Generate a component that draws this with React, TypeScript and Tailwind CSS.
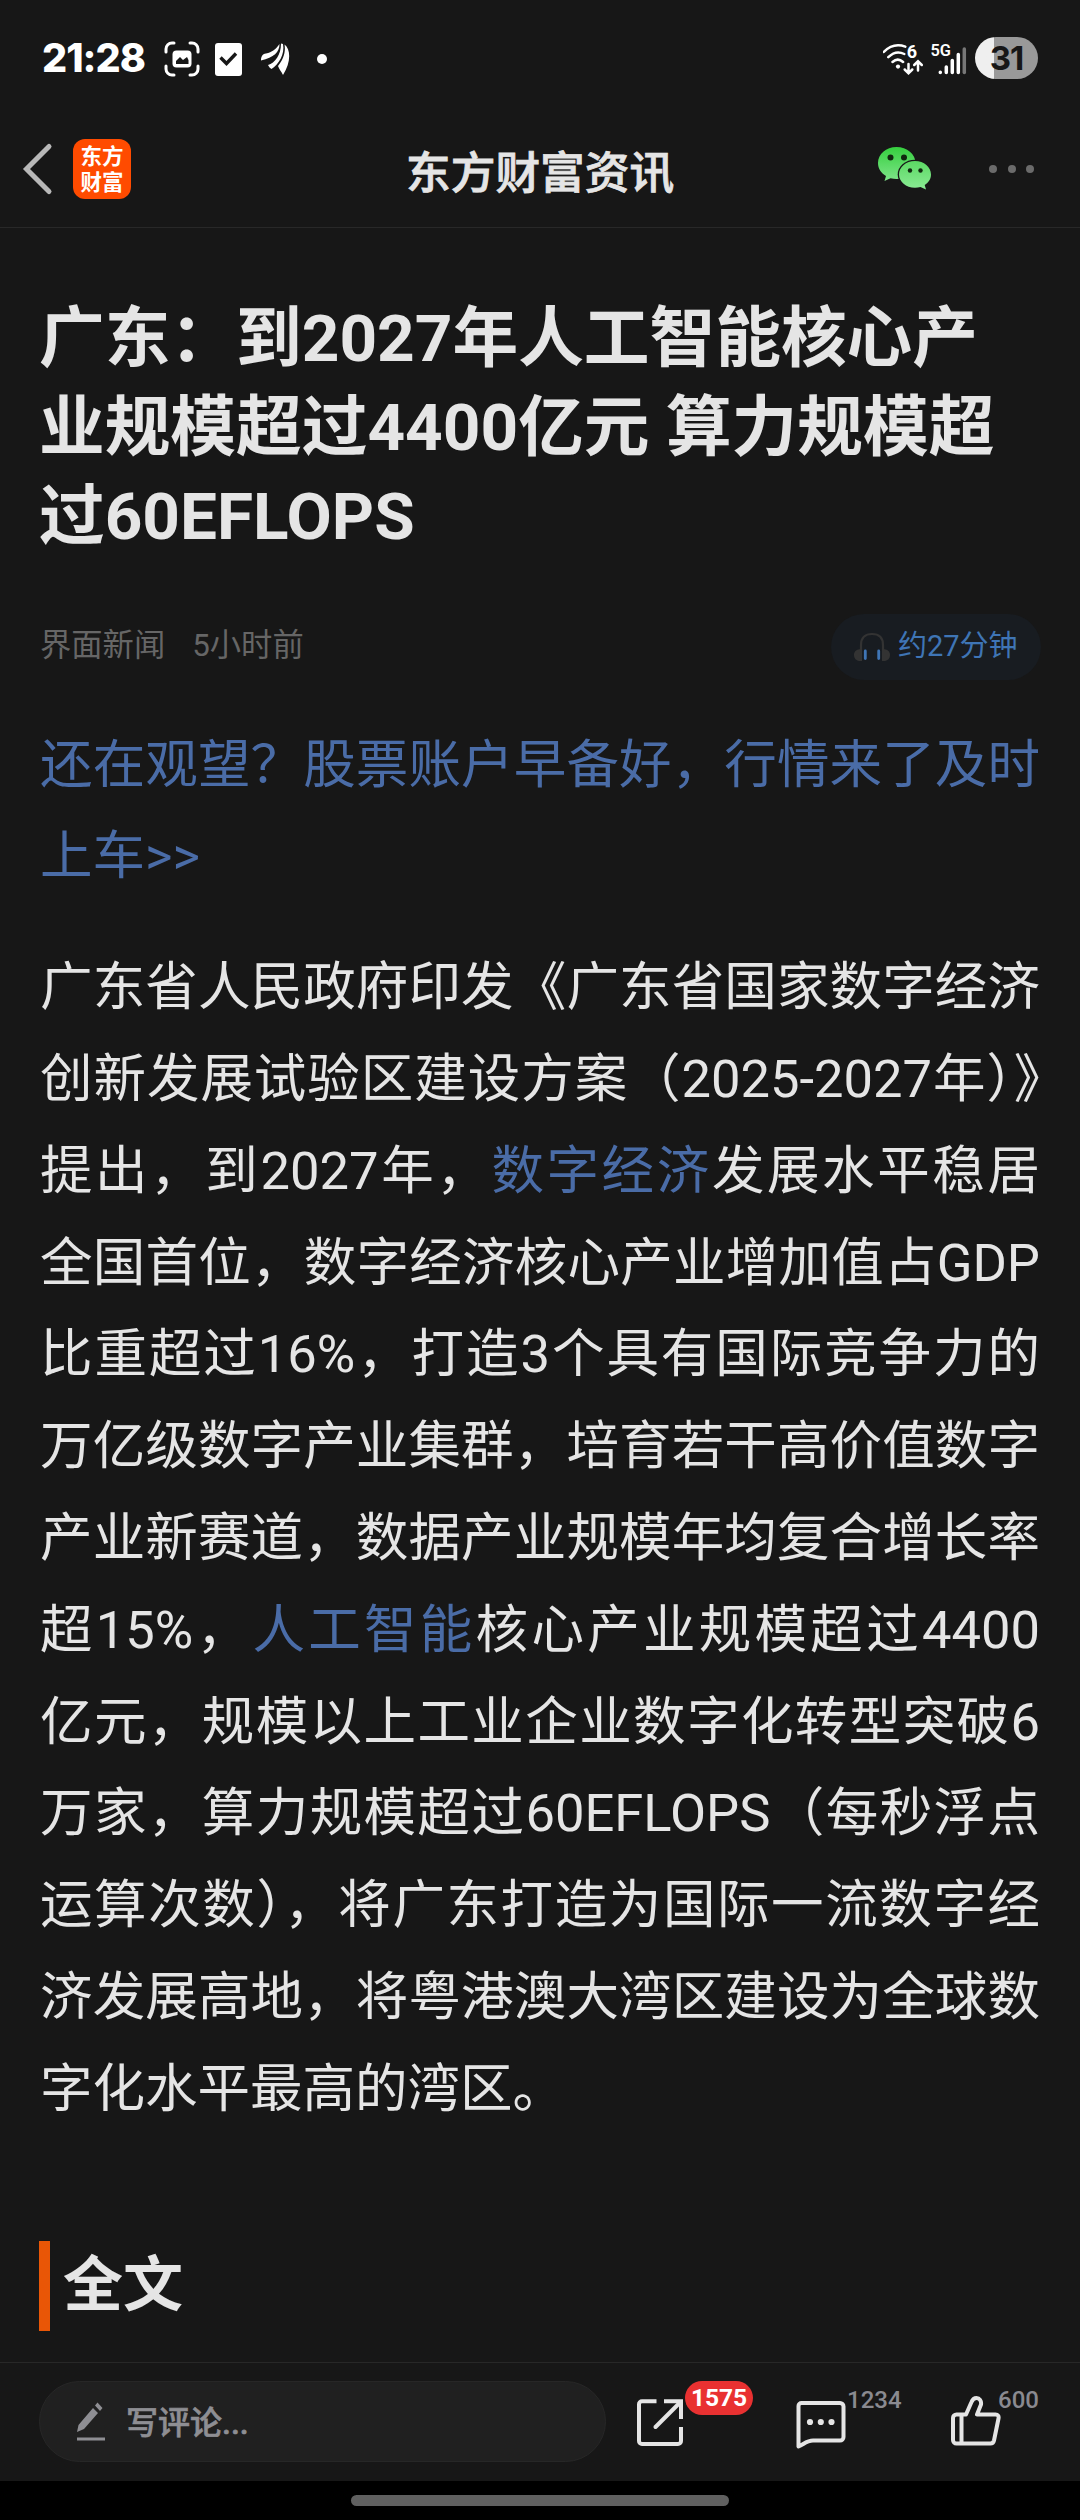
import React from "react";

function StatusBar() {
  return (
    <div className="flex h-[112px] items-start justify-between">
      <div className="flex items-start pl-[42px] pt-[36px]">
        <span className="w-[122px] font-['Inter'] text-[39.5px] font-extrabold leading-[44px] tracking-[-1px] text-white">21:28</span>
        <svg className="mt-[5px]" width="36" height="36" viewBox="0 0 36 36" fill="none">
          <path d="M2 11V8a6 6 0 0 1 6-6h2M26 2h2a6 6 0 0 1 6 6v3M34 25v3a6 6 0 0 1-6 6h-2M10 34H8a6 6 0 0 1-6-6v-3" stroke="#fff" strokeWidth="3" strokeLinecap="round" />
          <rect x="8.500" y="9.500" width="19" height="17" rx="4" fill="#fff" />
          <path d="M12 23v-3l4-4 3 3 4-3 1.500 3v4z" fill="#171717" />
        </svg>
        <svg className="ml-[15px] mt-[7px]" width="27" height="33" viewBox="0 0 27 33" fill="none">
          <rect width="27" height="33" rx="3" fill="#fff" />
          <path d="M5.500 14.500l6 6L21 10.500" stroke="#171717" strokeWidth="3.400" />
        </svg>
        <svg className="ml-[19px] mt-[7px]" width="29" height="33" viewBox="0 0 29 33" fill="#fff">
          <path d="M0 17.500C0 14 1 11 5 10.500 11 9.500 15 6 18.500 1 18.500 9 13 14.500 0 17.500z" />
          <path d="M7 22C14 20 20 12 20 .500l2 .500C24 11 18 21 10.500 26 9 25 8 24 7 22z" />
          <path d="M17 23C22 17 25 9 23.500 1.500 30 6 30 20 22 32 20 28 18 26 17 23z" />
        </svg>
        <span className="ml-[27px] mt-[18px] size-[10px] rounded-full bg-white" />
      </div>
      <div className="flex items-start pr-[42px] pt-[37px]">
        <svg width="42" height="42" viewBox="0 0 42 42" fill="none" stroke="#fff" strokeWidth="2.500" strokeLinecap="round">
          <path d="M.800 15C7 8.500 15 7 22.300 9.600M5.300 20.200c4.500-4.500 10.500-6 16-3.200M9.500 25c3.300-3 7.300-3 10.600 0" />
          <circle cx="15" cy="29.600" r="2.100" fill="#fff" stroke="none" />
          <path d="M25.500 27v9M21.700 32.500l3.800 3.800 3.800-3.800M35 33.500v-9M31.200 28l3.800-3.800 3.800 3.800" />
          <text x="23.800" y="20.500" fill="#fff" stroke="none" fontFamily="Roboto" fontSize="18" fontWeight="700">6</text>
        </svg>
        <svg className="ml-[6px]" width="38" height="42" viewBox="0 0 38 42">
          <text x="-.5" y="18.700" fill="#fff" fontFamily="Roboto" fontSize="16.500" fontWeight="600" textLength="20.500" lengthAdjust="spacingAndGlyphs">5G</text>
          <g stroke="#fff" strokeWidth="3.500" strokeLinecap="round">
            <path d="M9.300 35.300v.200M15.300 30v5.500M21.300 23.500v12M27.300 17.500v18" />
            <path d="M33.300 12v23.500" stroke="#777" />
          </g>
        </svg>
        <div className="ml-[6px] h-[42px] w-[63px] rounded-full bg-linear-to-r from-[#efefef] from-30% to-[#999] to-30% text-center font-['Inter'] text-[33px] font-bold leading-[43px] tracking-[-1px] text-[#171717]">31</div>
      </div>
    </div>
  );
}

function NavBar() {
  return (
    <header className="flex h-[116px] items-start border-b border-[#282828]">
      <svg className="ml-[22px] mt-[30px]" width="32" height="54" viewBox="0 0 32 54" fill="none">
        <path d="M27 4.500L4.500 27 27 49.500" stroke="#b8b8b8" strokeWidth="5" strokeLinecap="round" />
      </svg>
      <div className="ml-[19px] mt-[27px] h-[60px] w-[58px] whitespace-pre-line rounded-[12px] bg-[#ff4b00] pt-[3px] text-center font-['Noto_Sans_CJK_SC'] text-[21.5px] font-bold leading-[25.5px] text-white">
        {"东方\n财富"}
      </div>
      <h2 className="ml-[275px] mt-[31px] w-[280px] whitespace-nowrap font-['Noto_Sans_CJK_SC'] text-[44.7px] font-medium leading-[54px] text-[#e5e5e5] [-webkit-text-stroke:0.8px_#e5e5e5]">东方财富资讯</h2>
      <svg className="ml-[191px] mt-[34px]" width="55" height="44" viewBox="0 0 55 44">
        <defs>
          <linearGradient id="chatBack" x1="0" y1="0" x2="0" y2="1"><stop stopColor="#35cf3e" /><stop offset="1" stopColor="#7fe58a" /></linearGradient>
          <linearGradient id="chatFront" x1="0" y1="0" x2="0" y2="1"><stop stopColor="#5bd963" /><stop offset="1" stopColor="#8beb95" /></linearGradient>
        </defs>
        <path d="M19.500 1C30 1 38.500 8 38.500 17S30 33 19.500 33c-2 0-4-.300-6-.800L7.500 35 9 30C4 27 1 22.500 1 17 1 8 9 1 19.500 1z" fill="url(#chatBack)" />
        <ellipse cx="38" cy="28.500" rx="17.300" ry="14.800" fill="#171717" />
        <path d="M38 15c9 0 16 6 16 13.500 0 4.500-2.500 8-6.300 10.500l1.300 4.500-5.500-2.500c-1.800.500-3.500.700-5.500.700-9 0-16-6-16-13.200S29 15 38 15z" fill="url(#chatFront)" />
        <g fill="#10290f"><circle cx="13.500" cy="11.500" r="3" /><circle cx="27" cy="11.500" r="3" /><circle cx="33" cy="24.500" r="2.200" /><circle cx="43.500" cy="24.500" r="2.200" /></g>
      </svg>
      <div className="ml-[57px] mt-[53px] flex gap-[10.5px]">
        <i className="size-[8px] rounded-full bg-[#6b6b6b]" />
        <i className="size-[8px] rounded-full bg-[#6b6b6b]" />
        <i className="size-[8px] rounded-full bg-[#6b6b6b]" />
      </div>
    </header>
  );
}

function Article() {
  return (
    <main className="h-[2134px] overflow-hidden px-[40px] pt-[66px] font-[Roboto,'Noto_Sans_CJK_SC',sans-serif] text-[#e5e5e5]">
      <h1 className="ml-[-1px] whitespace-nowrap text-[65.7px] font-bold leading-[89.2px]">
        <span className="block">广东：到2027年人工智能核心产</span>
        <span className="block">业规模超过4400亿元 算力规模超</span>
        <span className="block">过60EFLOPS</span>
      </h1>
      <div className="mt-[52px] flex h-[66px] items-center justify-between">
        <div className="flex gap-[27px] text-[31.3px] text-[#666]">
          <span>界面新闻</span>
          <span>5小时前</span>
        </div>
        <div className="mr-[-1px] flex h-[66px] w-[210px] items-center rounded-full bg-[#181c21] pl-[23px]">
          <svg width="36" height="30" viewBox="0 0 36 30" fill="none">
            <path d="M7 18v-5C7 6 11 2 18 2s11 4 11 11v5" stroke="#333" strokeWidth="2.200" />
            <path d="M8 17v12C3 29.500 0 27 0 23s3-6 8-6zM28 17v12c5 .500 8-2 8-6s-3-6-8-6z" fill="#333" />
            <path d="M11.300 19v7.500M24.700 19v7.500" stroke="#3f75b5" strokeWidth="2.800" strokeLinecap="round" />
          </svg>
          <span className="ml-[8px] whitespace-nowrap text-[29px] text-[#3f75b5]">约27分钟</span>
        </div>
      </div>
      <p className="mt-[40px] text-justify text-[52.5px] leading-[91.8px] text-[#4a6ca7]">还在观望？股票账户早备好，行情来了及时上车&gt;&gt;</p>
      <p className="mt-[39px] text-justify text-[52.5px] leading-[91.8px]">
        广东省人民政府印发《广东省国家数字经济创新发展试验区建设方案（2025-2027年）》提出，到2027年，<a className="text-[#4a6ca7]">数字经济</a>发展水平稳居全国首位，数字经济核心产业增加值占GDP比重超过16%，打造3个具有国际竞争力的万亿级数字产业集群，培育若干高价值数字产业新赛道，数据产业规模年均复合增长率超15%，<a className="text-[#4a6ca7]">人工智能</a>核心产业规模超过4400亿元，规模以上工业企业数字化转型突破6万家，算力规模超过60EFLOPS（每秒浮点运算次数），将广东打造为国际一流数字经济发展高地，将粤港澳大湾区建设为全球数字化水平最高的湾区。
      </p>
      <h3 className="ml-[-1px] mt-[105px] flex h-[90px] items-center border-l-[11px] border-[#e95606] pl-[13px] text-[60px] font-bold leading-[90px]">全文</h3>
    </main>
  );
}

function BottomBar() {
  return (
    <footer className="flex h-[119px] items-start border-t border-[#282828] font-[Roboto,'Noto_Sans_CJK_SC',sans-serif]">
      <div className="ml-[39px] mt-[18px] flex h-[81px] w-[567px] items-center rounded-full border border-[#272727] bg-[#202020] pl-[36px]">
        <svg width="30" height="40" viewBox="0 0 30 40" fill="#8e8e93">
          <path d="M1 30l1.500-7L17 6l5 5L8 27zM19 3.500l2.500-3 5 5.500-2.500 3z" />
          <rect x="1" y="35.500" width="28" height="3" />
        </svg>
        <span className="ml-[20px] mt-[3px] text-[32px] font-medium text-[#8e8e93] [-webkit-text-stroke:0.6px_#8e8e93]">写评论...</span>
      </div>
      <div className="ml-[31px] flex items-start">
        <svg className="mt-[36px]" width="47" height="48" viewBox="0 0 47 48" fill="none" stroke="#e5e5e5" strokeWidth="4">
          <path d="M19.500 2.300H5a3 3 0 0 0-3 3V42a3 3 0 0 0 3 3h36a3 3 0 0 0 3-3V28" />
          <path d="M27 2.300h17V20" />
          <path d="M43 3.500L18.500 28" strokeLinecap="round" />
        </svg>
        <span className="ml-[1px] mt-[18px] h-[34px] w-[68px] rounded-full bg-[#e93131] text-center text-[24.5px] font-bold leading-[34px] text-white">1575</span>
      </div>
      <div className="ml-[43px] flex items-start">
        <svg className="mt-[38px]" width="50" height="48" viewBox="0 0 50 48" fill="none" stroke="#e5e5e5" strokeWidth="4" strokeLinejoin="round">
          <path d="M5.500 2H44a3.500 3.500 0 0 1 3.500 3.500V36a3.500 3.500 0 0 1-3.500 3.500H17c-6 0-9 3.500-14.500 6V5a3 3 0 0 1 3-3z" />
          <g fill="#e5e5e5" stroke="none"><circle cx="14" cy="21" r="3.100" /><circle cx="24.800" cy="21" r="3.100" /><circle cx="35.500" cy="21" r="3.100" /></g>
        </svg>
        <span className="ml-[1px] mt-[21px] w-[60px] text-[24px] font-medium leading-[32px] text-[#8a8a90]">1234</span>
      </div>
      <div className="ml-[44px] flex items-start">
        <svg className="mt-[33px]" width="50" height="50" viewBox="0 0 50 50" fill="none" stroke="#e5e5e5" strokeWidth="4" strokeLinejoin="round">
          <path d="M5.500 18.500H15L20.500 6c1-2.500 2.500-4 5-4 3 0 5 3 4.500 6.500L26 18.500h18.500c2.500 0 3.500 1.500 3 4L43 44.500c-.500 2-1.500 3-3.500 3h-34a3.500 3.500 0 0 1-3.500-3.500V22a3.500 3.500 0 0 1 3.500-3.500zM10.500 19v28" />
        </svg>
        <span className="ml-[-3px] mt-[21px] text-[24px] font-medium leading-[32px] text-[#8a8a90]">600</span>
      </div>
    </footer>
  );
}

export default function App() {
  return (
    <div className="flex h-[2520px] w-[1080px] flex-col overflow-hidden bg-[#171717]">
      <StatusBar />
      <NavBar />
      <Article />
      <BottomBar />
      <div className="h-[39px] bg-black pt-[14px]">
        <div className="mx-auto h-[11px] w-[378px] rounded-full bg-[#606060]" />
      </div>
    </div>
  );
}
